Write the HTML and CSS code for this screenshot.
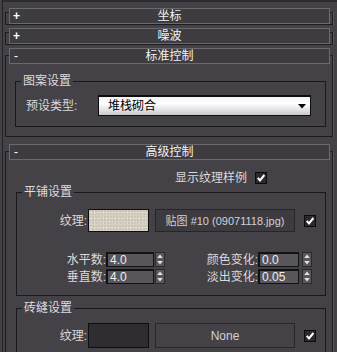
FILE: index.html
```html
<!DOCTYPE html>
<html lang="zh">
<head>
<meta charset="utf-8">
<title>标准控制</title>
<link rel="stylesheet" href="styles.css">
</head>
<body>
<div class="panel">
  <section class="rollout closed">
    <div class="rhead"><span class="sign">+</span><span class="title">坐标</span><span></span></div>
  </section>
  <section class="rollout closed r2">
    <div class="rhead"><span class="sign">+</span><span class="title">噪波</span><span></span></div>
  </section>
  <section class="rollout open r3">
    <div class="rhead"><span class="sign minus">-</span><span class="title">标准控制</span><span></span></div>
    <div class="group g-pattern">
      <span class="legend">图案设置</span>
      <div class="preset-row">
        <span class="lbl-preset">预设类型:</span>
        <div class="dropdown">
          <span>堆栈砌合</span>
          <svg class="dd-arrow" width="8" height="5" viewBox="0 0 8 5"><path d="M0 0H8L4 4.5Z" fill="#000"/></svg>
        </div>
      </div>
    </div>
  </section>
  <section class="rollout open r4">
    <div class="rhead"><span class="sign minus">-</span><span class="title">高级控制</span><span></span></div>
    <div class="show-row">
      <span>显示纹理样例</span>
      <svg class="check" width="12" height="12" viewBox="0 0 12 12"><rect x=".5" y=".5" width="11" height="11" fill="#2c2a2f" stroke="#0b0b0b"/><path d="M2.8 5.8L5 8.4L9.4 3" fill="none" stroke="#fff" stroke-width="2"/></svg>
    </div>
    <div class="group g-tile">
      <span class="legend">平铺设置</span>
      <div class="tex-row">
        <span class="lbl-tex">纹理:</span>
        <div class="swatch light"></div>
        <div class="mapbtn">贴图 #10 (09071118.jpg)</div>
        <svg class="check" width="12" height="12" viewBox="0 0 12 12"><rect x=".5" y=".5" width="11" height="11" fill="#2c2a2f" stroke="#0b0b0b"/><path d="M2.8 5.8L5 8.4L9.4 3" fill="none" stroke="#fff" stroke-width="2"/></svg>
      </div>
      <div class="spin-row first">
        <span class="lbl-l">水平数:</span>
        <div class="num w-l">4.0</div>
        <svg class="spin sl" width="10" height="15" viewBox="0 0 10 15"><rect x=".5" y=".5" width="9" height="14" fill="#59575c" stroke="#2a292d"/><path d="M5 2.5L7.8 6H2.2Z M5 12.5L7.8 9H2.2Z" fill="#e2e2e2"/></svg>
        <span class="lbl-r">颜色变化:</span>
        <div class="num w-r">0.0</div>
        <svg class="spin sr" width="10" height="15" viewBox="0 0 10 15"><rect x=".5" y=".5" width="9" height="14" fill="#59575c" stroke="#2a292d"/><path d="M5 2.5L7.8 6H2.2Z M5 12.5L7.8 9H2.2Z" fill="#e2e2e2"/></svg>
      </div>
      <div class="spin-row">
        <span class="lbl-l">垂直数:</span>
        <div class="num w-l">4.0</div>
        <svg class="spin sl" width="10" height="15" viewBox="0 0 10 15"><rect x=".5" y=".5" width="9" height="14" fill="#59575c" stroke="#2a292d"/><path d="M5 2.5L7.8 6H2.2Z M5 12.5L7.8 9H2.2Z" fill="#e2e2e2"/></svg>
        <span class="lbl-r">淡出变化:</span>
        <div class="num w-r">0.05</div>
        <svg class="spin sr" width="10" height="15" viewBox="0 0 10 15"><rect x=".5" y=".5" width="9" height="14" fill="#59575c" stroke="#2a292d"/><path d="M5 2.5L7.8 6H2.2Z M5 12.5L7.8 9H2.2Z" fill="#e2e2e2"/></svg>
      </div>
    </div>
    <div class="group g-mortar">
      <span class="legend">砖缝设置</span>
      <div class="tex-row tall">
        <span class="lbl-tex">纹理:</span>
        <div class="swatch dark"></div>
        <div class="mapbtn none">None</div>
        <svg class="check" width="12" height="12" viewBox="0 0 12 12"><rect x=".5" y=".5" width="11" height="11" fill="#2c2a2f" stroke="#0b0b0b"/><path d="M2.8 5.8L5 8.4L9.4 3" fill="none" stroke="#fff" stroke-width="2"/></svg>
      </div>
    </div>
  </section>
</div>
</body>
</html>
```
FILE: styles.css
```css
* { box-sizing: border-box; }
html, body { margin: 0; height: 100%; }
body {
  background: #444247;
  overflow: hidden;
  font: 12px/14px "Liberation Sans", "Noto Sans CJK SC", sans-serif;
  color: #d9d8dc;
}
.panel {
  margin-left: 2px;
  height: 100%;
  overflow: hidden;
  border-left: 1px solid #242327;
  border-top: 2px solid #2c2b2f;
  padding: 10px 0 0 2px;
}
.rollout {
  width: 328px;
  border: 1px solid #1d1c20;
  box-shadow: 1px 0 0 #5a585d;
}
.rhead {
  height: 16px;
  display: grid;
  grid-template-columns: 1fr auto 1fr;
  align-items: center;
  background: #3e3c41;
  border: 1px solid #6b696e;
  color: #f2f2f2;
  line-height: 14px;
}
.closed .rhead { margin: -5px 2px 0 3px; }
.open .rhead { margin: -8px 2px 0 3px; }
.sign {
  padding-left: 3px;
  font: bold 12px/14px "Liberation Sans", sans-serif;
  color: #fff;
}
.sign.minus { padding-left: 4px; font-weight: normal; }
.r2 { margin-top: 7px; }
.r3 { margin-top: 10px; }
.r4 { margin-top: 14px; }

.group {
  position: relative;
  border: 1px solid #19181c;
}
.legend {
  position: absolute;
  top: -8px;
  left: 5px;
  padding: 0 2px;
  background: #444247;
  line-height: 14px;
  color: #dcdbe0;
}
.g-pattern { margin: 17px 6px 9px 9px; padding: 13px 14px 10px 10px; }
.preset-row { display: flex; align-items: center; height: 21px; }
.lbl-preset { width: 72px; }
.dropdown {
  flex: 1;
  height: 21px;
  display: flex;
  align-items: center;
  justify-content: space-between;
  padding: 0 4px 0 9px;
  border: 1px solid #0d0d0f;
  border-top-width: 2px;
  background: linear-gradient(#f2f1f6, #ffffff 35%, #e4e3e8 70%, #c9c8cd);
  color: #000;
}
.dd-arrow { margin-top: 1px; }

.show-row {
  margin-top: 10px;
  height: 16px;
  display: flex;
  align-items: center;
  justify-content: flex-end;
  gap: 8px;
  padding-right: 65px;
}
.check { display: block; flex: none; }

.g-tile { margin: 6px 6px 0 10px; padding: 16px 0 11px 0; }
.g-mortar { margin: 12px 6px 0 10px; padding: 14px 0 6px 0; }
.tex-row { display: flex; align-items: center; height: 23px; }
.tex-row.tall { height: 25px; }
.lbl-tex { width: 70px; text-align: right; margin-right: 1px; }
.swatch {
  width: 61px;
  height: 100%;
  border: 1px solid #0e0e0e;
}
.swatch.light {
  background:
    radial-gradient(circle at 1px 1px, rgba(150,140,120,.22) 0.8px, transparent 1.2px) 0 0 / 3px 3px,
    radial-gradient(circle at 1px 1px, rgba(255,255,250,.25) 0.8px, transparent 1.2px) 1px 2px / 4px 5px,
    #d8d2c4;
}
.swatch.dark { background: #2f2d31; }
.mapbtn {
  width: 140px;
  height: 100%;
  margin-left: 6px;
  margin-right: 9px;
  display: flex;
  align-items: center;
  justify-content: center;
  background: #3d3b40;
  border: 1px solid #262529;
  color: #d2d1d6;
  font-size: 11px;
}
.mapbtn.none { background: #444247; border-color: #28272b; font-size: 12px; }

.spin-row { display: flex; align-items: center; height: 15px; margin-top: 2px; }
.spin-row.first { margin-top: 20px; }
.lbl-l { width: 89px; text-align: right; }
.lbl-r { width: 92px; text-align: right; margin-left: 1px; }
.num {
  height: 15px;
  padding-left: 2px;
  background: #58565b;
  border: 1px solid #131215;
  border-top-width: 2px;
  border-left-width: 2px;
  color: #eeeeee;
  line-height: 12px;
}
.w-l { width: 48px; }
.w-r { width: 41px; }
.spin { display: block; flex: none; }
.sl { margin-left: 1px; }
.sr { margin-left: 3px; }
```
